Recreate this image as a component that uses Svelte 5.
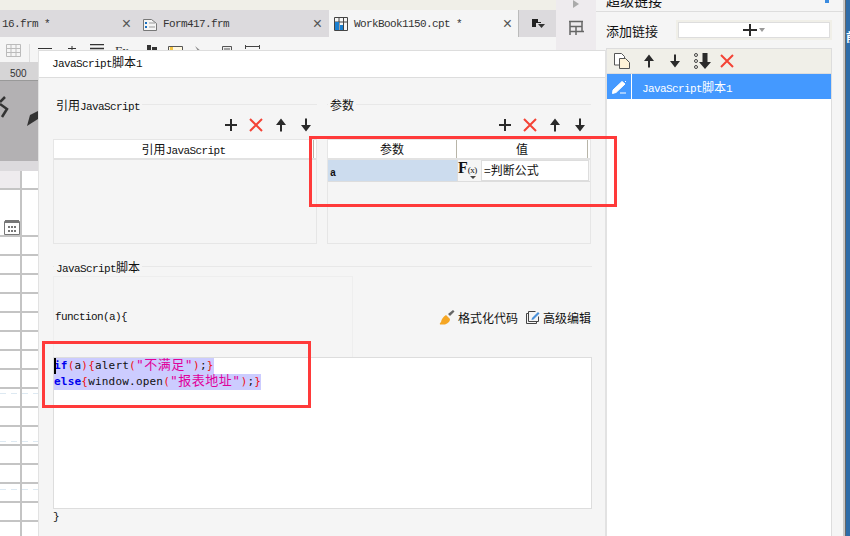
<script>
  const rows = Array.from({ length: 16 }, (_, i) => i);
  const dashes = [222, 270, 318];
</script>

{#snippet plus()}
  <svg class="ic" viewBox="0 0 14 14"><path d="M7 1v12M1 7h12" stroke="#2b2b2b" stroke-width="2" fill="none" /></svg>
{/snippet}
{#snippet cross()}
  <svg class="ic" viewBox="0 0 14 14"><path d="M1 1l12 12M13 1L1 13" stroke="#f44336" stroke-width="2" fill="none" /></svg>
{/snippet}
{#snippet up()}
  <svg class="ic" viewBox="0 0 14 14"><path d="M7 0.5L12 7H8v6.500H6V7H2z" fill="#2b2b2b" /></svg>
{/snippet}
{#snippet down()}
  <svg class="ic" viewBox="0 0 14 14"><path d="M7 13.500L12 7H8V0.500H6V7H2z" fill="#2b2b2b" /></svg>
{/snippet}
{#snippet tools()}
  <div class="tools">{@render plus()}{@render cross()}{@render up()}{@render down()}</div>
{/snippet}

<div class="screen">
  <div class="main">
    <div class="left">
      <div class="topbar"></div>
      <div class="tabs">
        <div class="tab first"><span class="t">16.frm *</span><span class="x">×</span></div>
        <div class="tab second">
          <svg class="tabicon" viewBox="0 0 16 16"><path d="M1.500 3.500h8l5 4v7h-13z" fill="#f4f4f4" stroke="#777" /><path d="M3 6h2v2H3zM3 10h2v2H3z" fill="#1a6fc0" /><path d="M7 7h6M7 11h6" stroke="#999" /></svg>
          <span class="t">Form417.frm</span><span class="x">×</span>
        </div>
        <div class="tab active">
          <svg class="tabicon" viewBox="0 0 16 16"><path d="M1.500 1.500h13v13h-13zM1.500 6h13M6 1.500v13M10.500 1.500v13" fill="none" stroke="#444" /><path d="M2 6h4v8H2zM7 9h3v5H7z" fill="#1a7fd0" /></svg>
          <span class="t">WorkBook1150.cpt *</span><span class="x">×</span>
        </div>
        <div class="tabmenu">
          <svg viewBox="0 0 14 10" width="14" height="10"><path d="M1 0h6v3h3v1H5v4H1z" fill="#222" /><path d="M7 5h7l-3.500 4z" fill="#333" /></svg>
        </div>
      </div>
      <div class="toolbar">
        <svg viewBox="0 0 15 13" width="15" height="13"><path d="M.5.500h14v12H.5zM.5 4.500h14M.5 8.500h14M5 .500v12M10 .500v12" fill="none" stroke="#bbb" /></svg>
        <span class="sep"></span>
        <svg viewBox="0 0 225 13" width="225" height="13">
          <path d="M0 4.500h14M34 2v6M30 4.500h8" stroke="#333" fill="none" />
          <path d="M52 .500h14M52 4.500h14" stroke="#333" stroke-width="1.500" fill="none" />
          <text x="77" y="11" class="fxmini">Fx</text>
          <path d="M109 1h4v12h-4zM114 3h5v10h-5z" fill="#333" />
          <path d="M130.500 2.500h14v10h-14z" fill="#fff8e0" stroke="#555" />
          <path d="M132 3h3v3h-3z" fill="#f5c542" />
          <path d="M157 2l7 6-4-1z" fill="#888" />
          <path d="M184.500 2.500h9v10h-9zM186 5h6" fill="#eee" stroke="#555" />
          <path d="M207.500 1v4M221.500 1v4M207 2.500h15" stroke="#444" fill="none" />
        </svg>
      </div>
      <div class="ruler">
        <span class="rulernum">500</span>
      </div>
      <div class="canvas">
        <svg class="strokes" viewBox="0 0 38 40" width="38" height="40"><path d="M5 1L0 6M0 8l7 5-5 8" fill="none" stroke="#333" stroke-width="2.500" /><path d="M27 30l3-11 8-4v8z" fill="#333" /></svg>
      </div>
      <div class="band"></div>
      <div class="sheet">
        <div class="row head"><span class="c1 pink"></span><span class="c2"></span></div>
        <div class="row tall">
          <span class="c1">
            <svg class="cal" viewBox="0 0 16 16" width="16" height="16"><path d="M.5 2.500h15v13H.5z" fill="none" stroke="#777" /><path d="M1 1h14v3H1z" fill="#777" /><path d="M4 7h2v2H4zM7 7h2v2H7zM10 7h2v2h-2zM4 11h2v2H4zM7 11h2v2H7zM10 11h2v2h-2z" fill="#777" /></svg>
          </span><span class="c2"></span>
        </div>
        {#each rows as r}
          <div class="row"><span class="c1"></span><span class="c2"></span></div>
        {/each}
        {#each dashes as top}
          <span class="dash" style="top: {top}px"></span>
        {/each}
      </div>
    </div>

    <div class="strip">
      <svg viewBox="0 0 6 8" width="6" height="8"><path d="M0 0l6 4-6 4z" fill="#aaa" /></svg>
      <svg class="stripicon" viewBox="0 0 16 16" width="16" height="16"><path d="M1 1.500h14M2 2v13M14 2v9M2 6.500h12M2 11.500h14M8 6v9" stroke="#666" stroke-width="1.500" fill="none" /></svg>
    </div>
  </div>

  <aside class="panel">
    <div class="panelhead"><span>超级链接</span><i></i></div>
    <div class="addrow">
      <span class="addlabel">添加链接</span>
      <div class="addwrap">
        <div class="addbtn">
          <svg viewBox="0 0 14 14" width="14" height="14"><path d="M7 1v12M0 7h14" stroke="#2b2b2b" stroke-width="2" /></svg>
          <svg viewBox="0 0 6 4" width="6" height="4"><path d="M0 0h6L3 4z" fill="#999" /></svg>
        </div>
      </div>
    </div>
    <div class="linklist">
      <div class="linktools">
        <svg class="ic big" viewBox="0 0 16 16"><path d="M.5.500h7l3 3V12H.5z" fill="#fff" stroke="#555" /><path d="M5.500 5.500h6l4 4v6h-10z" fill="#fff3d8" stroke="#555" /></svg>
        {@render up()}
        {@render down()}
        <svg class="ic move" viewBox="0 0 18 16"><circle cx="2" cy="2" r="1.500" fill="none" stroke="#444" /><circle cx="2" cy="8" r="1.500" fill="none" stroke="#444" /><circle cx="2" cy="14" r="1.500" fill="none" stroke="#444" /><path d="M11 16l6-7h-3.500V0h-5v9H5z" fill="#2b2b2b" /></svg>
        {@render cross()}
      </div>
      <div class="linkrow">
        <span class="pencil">
          <svg viewBox="0 0 15 15" width="15" height="15"><path d="M1 11L10 2.500l3 2.500-9 8.500-3.500 1zM13 2l1 1M8 14h6" fill="#fff" stroke="#fff" /></svg>
        </span>
        <span class="linkname"><span class="l">JavaScript</span>脚本<span class="l">1</span></span>
      </div>
    </div>
  </aside>
  <div class="edge"><span>前</span></div>

  <section class="dialog">
    <header class="title"><span class="l">JavaScript</span>脚本<span class="l">1</span></header>
    <div class="body">
      <div class="cols">
        <div class="col">
          <div class="legend"><span>引用<span class="l">JavaScript</span></span></div>
          {@render tools()}
          <div class="table">
            <div class="thead">
              <span class="th wide">引用<span class="l">JavaScript</span></span>
            </div>
          </div>
        </div>
        <div class="col">
          <div class="legend"><span>参数</span></div>
          {@render tools()}
          <div class="table">
            <div class="thead">
              <span class="th name">参数</span>
              <span class="th val">值</span>
            </div>
            <div class="tr">
              <span class="td name"><span class="cell">a</span></span>
              <span class="fx"><b>F</b><i>(x)</i><em></em></span>
              <span class="input">=判断公式</span>
            </div>
          </div>
        </div>
      </div>

      <div class="legend script"><span><span class="l">JavaScript</span>脚本</span></div>
      <div class="fnrow">
        <div class="fnbox"><span class="l">function(a){'{'}</span></div>
        <div class="actions">
          <span class="action">
            <svg viewBox="0 0 16 16" width="16" height="16"><path d="M9 5L14 1l1.500 1.500L11 7z" fill="#666" /><path d="M7 6l4 4c0 3-2 4-5 5.500H1c-.5-1 0-1.500 1-2.500 .5-3 2-5 5-7z" fill="#f5a623" /></svg>
            格式化代码
          </span>
          <span class="action">
            <svg viewBox="0 0 14 14" width="14" height="14"><path d="M.5 3.500h2M.5 3.500v10h10v-2" fill="none" stroke="#444" /><path d="M2.500 1.500h7M2.500 1.500v10h10v-5" fill="none" stroke="#444" /><path d="M6 8l6-6 1.500 1.500-6 6-2 .5z" fill="#4a90d9" /></svg>
            高级编辑
          </span>
        </div>
      </div>
      <div class="editor">
        <div class="code"><span class="caret"></span><span class="sel"><b>if</b><u>(</u>a<u>)</u><u>{'{'}</u>alert<u>(</u><s>"不满足"</s><u>)</u>;<u>{'}'}</u></span></div>
        <div class="code"><span class="sel"><b>else</b><u>{'{'}</u>window.open<u>(</u><s>"报表地址"</s><u>)</u>;<u>{'}'}</u></span></div>
      </div>
      <div class="closing"><span class="l">{'}'}</span></div>
    </div>
  </section>

  <div class="mark one"></div>
  <div class="mark two"></div>
</div>

<style>
  :global(body) {
    margin: 0;
    background: #fff;
  }

  .screen {
    position: relative;
    display: flex;
    width: 850px;
    height: 536px;
    overflow: hidden;
    font-family: "Noto Sans CJK SC", "Liberation Mono", sans-serif;
    font-size: 12px;
    color: #111;
  }

  .l {
    font-family: "Liberation Mono", monospace;
    font-size: 11px;
    letter-spacing: -0.6px;
  }

  .ic {
    width: 14px;
    height: 14px;
    flex: none;
  }

  .main {
    display: flex;
    width: 596px;
    flex: none;
  }

  .left {
    width: 556px;
    flex: none;
  }

  .topbar {
    height: 10px;
    background: #f0efe8;
  }

  .tabs {
    display: flex;
    height: 27px;
    background: #dcdadd;
    color: #333;
  }

  .tab {
    display: flex;
    align-items: center;
    box-sizing: border-box;
    height: 27px;
  }

  .tab .t {
    font-family: "Liberation Mono", monospace;
    font-size: 11px;
    letter-spacing: -0.6px;
  }

  .tab .x {
    margin-left: auto;
    font-family: "Liberation Sans", sans-serif;
    font-size: 16px;
    color: #555;
  }

  .tab.first {
    width: 133px;
    padding: 0 1px 0 2px;
  }

  .tab.first .x {
    margin-right: 1px;
  }

  .tab.second {
    width: 196px;
    padding: 0 7px 0 9px;
  }

  .tab.active {
    width: 190px;
    padding: 0 6px 0 4px;
    background: #f5f5f5;
    border-right: 1px solid #bbb;
  }

  .tabicon {
    width: 16px;
    height: 16px;
    margin-right: 5px;
    flex: none;
  }

  .tabmenu {
    display: flex;
    align-items: center;
    justify-content: center;
    flex: 1;
  }

  .toolbar {
    display: flex;
    align-items: flex-start;
    gap: 8px;
    box-sizing: border-box;
    height: 25px;
    padding: 7px 0 0 6px;
    background: #f5f5f5;
  }

  .sep {
    width: 1px;
    height: 18px;
    background: #ddd;
  }

  .fxmini {
    font-family: "Liberation Serif", serif;
    font-size: 13px;
    fill: #333;
  }

  .ruler {
    box-sizing: border-box;
    height: 19px;
    padding: 1px 0 0 10px;
    background: #d6d5d6;
    border-bottom: 1px solid #999;
  }

  .rulernum {
    font-family: "Liberation Sans", sans-serif;
    font-size: 10px;
    color: #333;
  }

  .canvas {
    height: 80px;
    background: #b3b1b3;
  }

  .strokes {
    display: block;
    padding-top: 15px;
  }

  .band {
    height: 10px;
    background: #dcdadd;
  }

  .sheet {
    position: relative;
    background: #fff;
  }

  .row {
    display: flex;
    box-sizing: border-box;
    height: 19px;
    border-bottom: 2px solid #c4c4c4;
  }

  .row.tall {
    height: 47px;
  }

  .c1 {
    position: relative;
    width: 20px;
    border-right: 2px solid #c4c4c4;
  }

  .pink {
    background: #eeebee;
  }

  .cal {
    position: absolute;
    left: 4px;
    bottom: 0;
  }

  .dash {
    position: absolute;
    left: 0;
    width: 38px;
    height: 1px;
    background: repeating-linear-gradient(to right, #dde9f2 0 6px, transparent 6px 11px);
  }

  .strip {
    display: flex;
    flex-direction: column;
    align-items: center;
    width: 40px;
    flex: none;
    height: 50px;
    background: #eeebee;
  }

  .stripicon {
    margin-top: 12px;
  }

  .panel {
    box-sizing: border-box;
    width: 247px;
    flex: none;
    padding-left: 10px;
    background: #f5f5f5;
  }

  .panelhead {
    position: relative;
    box-sizing: border-box;
    height: 12px;
    margin-left: -10px;
    padding-left: 10px;
    line-height: 0;
    font-size: 14px;
    border-bottom: 1px solid #ddd;
  }

  .panelhead i {
    position: absolute;
    top: 0;
    left: 229px;
    width: 4px;
    height: 3px;
    background: #3a8be0;
  }

  .addrow {
    display: flex;
    align-items: center;
    justify-content: space-between;
    height: 36px;
    padding-right: 11px;
  }

  .addwrap {
    padding: 2px;
    background: #f0efe8;
  }

  .addbtn {
    display: flex;
    align-items: center;
    justify-content: center;
    gap: 2px;
    box-sizing: border-box;
    width: 152px;
    height: 16px;
    background: #fff;
    border: 1px solid #ddd;
  }

  .addlabel {
    font-size: 13px;
  }

  .linklist {
    box-sizing: border-box;
    width: 226px;
    height: 489px;
    background: #fff;
    border: 1px solid #ddd;
  }

  .linktools {
    display: flex;
    align-items: center;
    gap: 12px;
    box-sizing: border-box;
    height: 25px;
    padding-left: 7px;
    background: #f0efe8;
    border-bottom: 1px solid #ddd;
  }

  .big {
    width: 16px;
    height: 16px;
  }

  .move {
    width: 18px;
    height: 16px;
    margin-right: -4px;
  }

  .linkrow {
    display: flex;
    align-items: center;
    height: 25px;
    background: #4499ff;
    color: #fff;
  }

  .pencil {
    display: flex;
    align-items: center;
    justify-content: center;
    box-sizing: border-box;
    width: 25px;
    height: 25px;
    border-right: 1px solid #fff;
  }

  .linkname {
    margin-left: 10px;
  }

  .edge {
    flex: 1;
    padding: 28px 0 0 3px;
    color: #fff;
    font-weight: 700;
    white-space: nowrap;
    background: linear-gradient(to right, #c8c8c8 0, #c8c8c8 2px, #666 2px, #666 3px, #2f6ca8 3px);
  }

  .dialog {
    position: absolute;
    left: 38px;
    top: 50px;
    display: flex;
    flex-direction: column;
    box-sizing: border-box;
    width: 569px;
    height: 486px;
    background: #f5f5f5;
    border-left: 1px solid #e2e2e2;
    border-right: 2px solid #e2e2e2;
  }

  .title {
    box-sizing: border-box;
    height: 28px;
    padding: 2px 0 0 13px;
    background: #fff;
    border-top: 1px solid #ddd;
    border-bottom: 1px solid #ddd;
  }

  .body {
    display: flex;
    flex-direction: column;
    padding: 17px 13px 0 14px;
  }

  .cols {
    display: flex;
    gap: 10px;
  }

  .col {
    width: 264px;
  }

  .legend {
    position: relative;
    display: flex;
    align-items: center;
    height: 18px;
    padding-left: 1px;
  }

  .legend::before {
    content: "";
    position: absolute;
    left: 0;
    right: 0;
    top: 9px;
    border-top: 1px solid #e8e8e8;
  }

  .legend > span {
    position: relative;
    padding: 0 2px;
    background: #f5f5f5;
  }

  .tools {
    display: flex;
    justify-content: flex-end;
    gap: 11px;
    height: 16px;
    margin-top: 5px;
    padding-right: 4px;
  }

  .table {
    box-sizing: border-box;
    height: 105px;
    margin-top: 5px;
    border: 1px solid #e6e6e6;
  }

  .thead {
    display: flex;
    height: 18px;
    background: #fff;
    border-bottom: 2px solid #e2e2e2;
    line-height: 18px;
    text-align: center;
  }

  .th {
    box-sizing: border-box;
    border-right: 1px solid #b8b5a8;
  }

  .th.wide {
    width: 260px;
  }

  .th.name {
    width: 129px;
  }

  .th.val {
    width: 131px;
  }

  .tr {
    display: flex;
    height: 21px;
    border-bottom: 1px solid #ddd;
  }

  .td.name {
    box-sizing: border-box;
    width: 129px;
    padding-left: 2px;
    background: #ccdcee;
    line-height: 21px;
  }

  .cell {
    font-family: "Liberation Mono", monospace;
    font-size: 10px;
    font-weight: 700;
  }

  .fx {
    position: relative;
    box-sizing: border-box;
    width: 24px;
    font-family: "Liberation Serif", serif;
    line-height: 15px;
    background: #f5f5f5;
    border-left: 1px solid #ddd;
    white-space: nowrap;
  }

  .fx b {
    font-size: 16px;
  }

  .fx i {
    font-size: 9px;
    font-style: normal;
    letter-spacing: -0.5px;
  }

  .fx em {
    position: absolute;
    right: 5px;
    bottom: 2px;
    border: 3px solid transparent;
    border-top-color: #444;
    border-bottom-width: 0;
  }

  .input {
    box-sizing: border-box;
    width: 108px;
    padding-left: 2px;
    line-height: 18px;
    background: #fff;
    border: 1px solid #ddd;
  }

  .script {
    margin-top: 13px;
  }

  .fnrow {
    display: flex;
    align-items: center;
    justify-content: space-between;
    height: 81px;
    margin-top: 1px;
  }

  .fnbox {
    box-sizing: border-box;
    display: flex;
    align-items: center;
    width: 300px;
    height: 100%;
    padding: 0 1px;
    border: 1px solid #eee;
    border-bottom: 0;
  }

  .actions {
    display: flex;
    gap: 8px;
    padding-top: 1px;
    padding-right: 1px;
  }

  .action {
    display: flex;
    align-items: center;
    gap: 3px;
  }

  .editor {
    box-sizing: border-box;
    height: 152px;
    background: #fff;
    border: 1px solid #ddd;
  }

  .code {
    position: relative;
    height: 16px;
    line-height: 13px;
    font-family: "DejaVu Sans Mono", "Noto Sans CJK SC", monospace;
    font-size: 11px;
    letter-spacing: 0.2px;
    white-space: nowrap;
    color: #111;
  }

  .code s {
    font-size: 13px;
    letter-spacing: 0.5px;
    text-decoration: none;
    color: #e0009a;
  }

  .code b {
    color: #0000ee;
  }

  .code u {
    text-decoration: none;
    color: #ee1111;
  }

  .sel {
    display: inline-block;
    height: 16px;
    background: #ccccff;
  }

  .caret {
    position: absolute;
    left: 0;
    top: 0;
    width: 2px;
    height: 16px;
    background: #000;
  }

  .closing {
    height: 14px;
    line-height: 12px;
  }

  /* red annotation rectangles drawn over the screenshot */
  .mark {
    position: absolute;
    box-sizing: border-box;
    border: 3px solid #ff3a3a;
  }

  .mark.one {
    left: 309px;
    top: 136px;
    width: 308px;
    height: 71px;
  }

  .mark.two {
    left: 42px;
    top: 341px;
    width: 269px;
    height: 67px;
  }
</style>
